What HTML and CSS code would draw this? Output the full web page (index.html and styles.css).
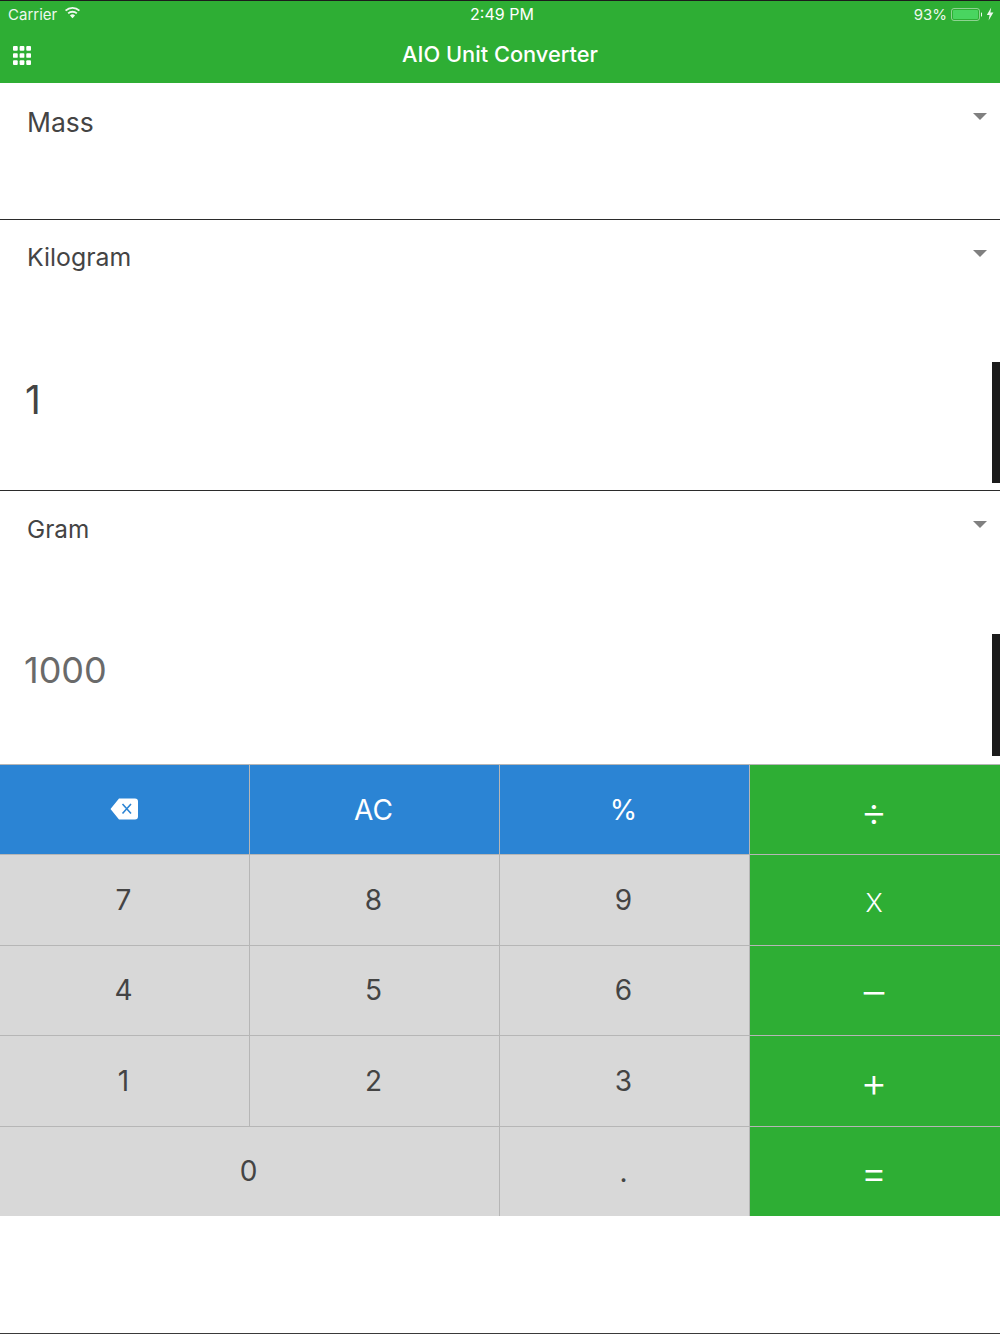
FILE: index.html
```html
<!DOCTYPE html>
<html lang="en">
<head>
<meta charset="utf-8">
<title>AIO Unit Converter</title>
<link rel="stylesheet" href="styles.css">
</head>
<body>
<div class="app">
  <header class="header">
    <div class="status">
      <div class="status-left">
        <span>Carrier</span>
        <svg class="wifi" width="17" height="13" viewBox="0 0 16 12"><path d="M8 11.5 5.6 8.8a3.4 3.4 0 0 1 4.8 0Z" fill="#fff"/><path d="M3.9 6.9a6 6 0 0 1 8.2 0M1.5 4.2a9.4 9.4 0 0 1 13 0" fill="none" stroke="#fff" stroke-width="1.7"/></svg>
      </div>
      <div class="status-time">2:49 PM</div>
      <div class="status-right">
        <span>93%</span>
        <svg class="battery" width="31" height="14" viewBox="0 0 31 14"><rect x="0.5" y="1.5" width="28" height="12" rx="2.5" fill="none" stroke="#fff" stroke-opacity=".5"/><rect x="2" y="3" width="25" height="9" rx="1" fill="#4cd964"/><path d="M30 5.5a2 2 0 0 1 0 4Z" fill="#fff"/></svg>
        <svg class="bolt" width="8" height="14" viewBox="0 0 8 14"><path d="M5.2 0.5 0.8 8h2.8L2.6 13.5 7.400 5.600H4.400Z" fill="#fff"/></svg>
      </div>
    </div>
    <div class="nav">
      <svg class="grid-icon" width="18" height="19" viewBox="0 0 19 20" fill="#fff">
        <rect x="0" y="0" width="5" height="5" rx="1"/><rect x="7" y="0" width="5" height="5" rx="1"/><rect x="14" y="0" width="5" height="5" rx="1"/>
        <rect x="0" y="7.500" width="5" height="5" rx="1"/><rect x="7" y="7.500" width="5" height="5" rx="1"/><rect x="14" y="7.500" width="5" height="5" rx="1"/>
        <rect x="0" y="15" width="5" height="5" rx="1"/><rect x="7" y="15" width="5" height="5" rx="1"/><rect x="14" y="15" width="5" height="5" rx="1"/>
      </svg>
      <h1 class="title">AIO Unit Converter</h1>
    </div>
  </header>

  <section class="panel panel-type">
    <div class="picker picker-large"><span>Mass</span><i class="caret"></i></div>
  </section>

  <section class="panel panel-from">
    <div class="picker picker-from"><span>Kilogram</span><i class="caret"></i></div>
    <div class="value-row value-row-from"><span class="value value-input">1</span><i class="scrollbar"></i></div>
  </section>

  <section class="panel panel-to">
    <div class="picker picker-to"><span>Gram</span><i class="caret"></i></div>
    <div class="value-row value-row-to"><span class="value value-output">1000</span><i class="scrollbar"></i></div>
  </section>

  <main class="keypad">
    <button class="key blue first">
      <svg width="28" height="22" viewBox="0 0 28 22"><path d="M9 0.500H25a3 3 0 0 1 3 3V18.500a3 3 0 0 1-3 3H9L0.500 11Z" fill="#fff"/><path d="M12.500 6 21 15.500M21 6 12.500 15.500" stroke="#2b84d4" stroke-width="1.600" fill="none"/></svg>
    </button>
    <button class="key blue">AC</button>
    <button class="key blue">%</button>
    <button class="key green sym">÷</button>
    <button class="key gray first">7</button>
    <button class="key gray">8</button>
    <button class="key gray">9</button>
    <button class="key green letter">X</button>
    <button class="key gray first">4</button>
    <button class="key gray">5</button>
    <button class="key gray">6</button>
    <button class="key green sym">–</button>
    <button class="key gray first">1</button>
    <button class="key gray">2</button>
    <button class="key gray">3</button>
    <button class="key green sym">+</button>
    <button class="key gray first wide">0</button>
    <button class="key gray dot">.</button>
    <button class="key green sym">=</button>
  </main>
</div>
</body>
</html>
```
FILE: styles.css
```css
* { box-sizing: border-box; }
html, body { margin: 0; padding: 0; background: #fff; }
body { font-family: Inter, "Liberation Sans", sans-serif; color: #444; }
.app { width: 1000px; height: 1334px; display: flex; flex-direction: column; border-bottom: 1px solid #3a3a3a; overflow: hidden; }

.header { height: 83px; flex: none; background: #2eae34; color: #fff; border-top: 1px solid #1c1c1c; }
.status { height: 26px; display: grid; grid-template-columns: 1fr auto 1fr; align-items: center; padding: 0 4px 0 8px; font-size: 15px; }
.status-left { display: flex; align-items: center; gap: 7px; opacity: .92; }
.status-right { display: flex; align-items: center; justify-content: flex-end; gap: 4px; margin-right: 2px; opacity: .92; }
.status-time { font-size: 16px; }
.wifi { margin-top: -4px; }
.bolt { margin-left: 0; }
.nav { height: 56px; display: grid; grid-template-columns: 1fr auto 1fr; align-items: center; padding: 0 13px 3px; }
.grid-icon { display: block; margin-top: 3px; }
.title { margin: 0; font-size: 21.800px; font-weight: 500; color: #fff; }

.panel { flex: none; border-bottom: 1px solid #2b2b2b; display: flex; flex-direction: column; }
.panel-type { height: 137px; }
.panel-from { height: 271px; }
.panel-to { height: 273px; border-bottom: 0; padding-bottom: 1px; }
.picker { display: flex; justify-content: space-between; padding: 23px 13px 0 27px; font-size: 24.800px; line-height: 32px; }
.picker-large { font-size: 26.500px; }
.picker-from, .picker-to { padding-top: 21px; }
.picker-from .caret { margin-top: 9px; }
.picker-to { padding-top: 22px; font-size: 24.300px; }
.picker-to .caret { margin-top: 8px; }
.caret { width: 0; height: 0; margin-top: 7px; border-left: 7px solid transparent; border-right: 7px solid transparent; border-top: 7px solid #808080; }
.value-row { margin-top: auto; display: flex; justify-content: space-between; align-items: flex-start; margin-bottom: 7px; padding-left: 24px; }
.value-row-from { height: 121px; }
.value-row-to { height: 122px; }
.value { line-height: 46px; font-weight: 400; }
.value-input { font-size: 39px; margin-top: 15px; margin-left: 1px; color: #444; }
.value-output { font-size: 36px; margin-top: 13px; color: #6a6a6a; }
.scrollbar { width: 8px; height: 100%; background: #1b1b1b; }

.keypad { flex: none; height: 452px; display: grid; grid-template-columns: 249px 250px 250px 251px; grid-template-rows: repeat(5, 1fr); }
.key { border: 0; border-top: 1px solid #b6b6b6; border-left: 1px solid #b6b6b6; padding: 0 2px 0 0; margin: 0; font-family: inherit; font-size: 28px; font-weight: 400; display: flex; align-items: center; justify-content: center; }
.first { border-left: 0; }
.blue { background: #2b84d4; color: #fff; }
.blue svg { margin-bottom: 2px; }
.gray { background: #d8d8d8; color: #444; }
.green { background: #2eae34; color: #fff; }
.sym { font-size: 41px; font-weight: 300; padding-top: 2px; }
.letter { font-size: 26px; font-weight: 300; padding-top: 5px; }
.wide { grid-column: span 2; }
.dot { padding-top: 2px; }
```
